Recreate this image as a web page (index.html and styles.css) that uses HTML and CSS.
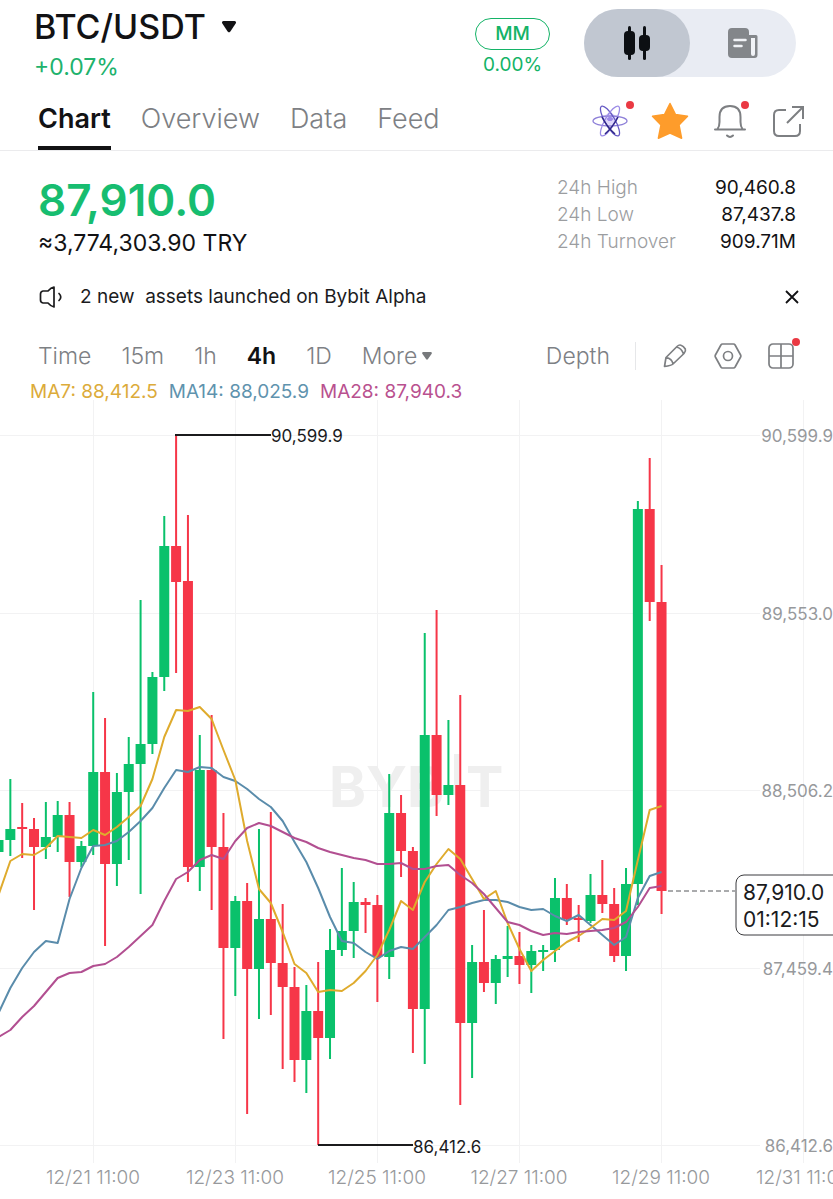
FILE: index.html
```html
<!DOCTYPE html>
<html lang="en">
    <head>
        <meta charset="utf-8">
        <title>BTC/USDT</title>
        <meta name="viewport" content="width=device-width, initial-scale=1.0">
        <link rel="stylesheet" href="styles.css">
    </head>
    <body>
    <header class="top-bar">
        <div class="pair">
            <h1>
                <button type="button" class="pair-button">BTC/USDT
                    <svg width="16" height="12" viewBox="0 0 16 13" aria-hidden="true"><path d="M2 0h12q2.500 .5 1.200 2.600L9.500 11.500q-1.500 1.800-3 0L.8 2.600Q-.5 .5 2 0z" fill="#121214"/></svg>
                </button>
            </h1>
            <p class="change">+0.07%</p>
        </div>
        <div class="margin-info">
            <span class="mm-badge">MM</span>
            <span class="mm-rate">0.00%</span>
        </div>
        <div class="view-switch">
            <button type="button" class="switch-item active" aria-label="Chart view">
                <svg width="28" height="36" viewBox="0 0 28 36" fill="#0c0f13"><rect x="1" y="6" width="11" height="24" rx="4"/><rect x="5" y="1" width="3" height="34" rx="1.500"/><rect x="16" y="10" width="11" height="16" rx="4"/><rect x="20" y="1" width="3" height="34" rx="1.500"/></svg>
            </button>
            <button type="button" class="switch-item" aria-label="Order view">
                <svg width="32" height="32" viewBox="0 0 32 32"><path d="M5 1h13q4 0 4 4v3h7q1.500 0 1.500 1.500V28q0 3-3 3H5q-4 0-4-4V5q0-4 4-4z" fill="#83868a"/><path d="M24 11h4v16q0 2-2 2t-2-2z" fill="#f1f3f7"/><path d="M7.500 13h11M7.500 19h7" stroke="#f1f3f7" stroke-width="2.500" stroke-linecap="round"/></svg>
            </button>
        </div>
    </header>

    <nav class="tabs">
        <a href="#chart" class="tab active">Chart</a>
        <a href="#overview" class="tab">Overview</a>
        <a href="#data" class="tab">Data</a>
        <a href="#feed" class="tab">Feed</a>
        <div class="tab-icons">
            <button type="button" class="icon-button dotted alpha" aria-label="Alpha">
                <svg width="36" height="36" viewBox="0 0 36 36" fill="none" stroke-width="1.300">
                    <circle cx="18" cy="16" r="6" fill="#ddd6fa"/>
                    <ellipse cx="18" cy="18" rx="17" ry="5" stroke="#8d7fd8"/>
                    <ellipse cx="18" cy="18" rx="17" ry="5" transform="rotate(60 18 18)" stroke="#6559c4"/>
                    <ellipse cx="18" cy="18" rx="17" ry="5" transform="rotate(120 18 18)" stroke="#9a8ae6"/>
                    <path d="M10 14q5 10 13 17M26 14q-5 10-13 17" stroke="#30288a" stroke-width="1.600"/>
                    <path d="M14.500 16l3.500-3 3.500 3-2 2h-3z" fill="#9c8be8"/>
                </svg>
            </button>
            <button type="button" class="icon-button" aria-label="Favourite">
                <svg width="38" height="38" viewBox="0 0 38 38"><path d="M19 1.500l5.500 11 12 1.700-8.500 8.700 2.600 13.300L19 31 7.400 36.200 10 22.900 1.500 14.200l12-1.700z" fill="#fe9c2b" stroke="#fe9c2b" stroke-width="1.500" stroke-linejoin="round"/></svg>
            </button>
            <button type="button" class="icon-button dotted" aria-label="Alerts">
                <svg width="36" height="36" viewBox="0 0 36 36" fill="none" stroke="#7d7f82" stroke-width="2" stroke-linecap="round" stroke-linejoin="round"><path d="M3 26.500h30M5.500 26q2-2.500 2-7v-5q0-11 10.500-11t10.500 11v5q0 4.500 2 7"/><path d="M15 32.500q3 3 6 0"/></svg>
            </button>
            <button type="button" class="icon-button" aria-label="Share">
                <svg width="36" height="36" viewBox="0 0 36 36" fill="none" stroke="#7d7f82" stroke-width="2"><path d="M15 7H8q-5 0-5 5v16q0 5 5 5h16q5 0 5-5v-7M16 20L32 4M21 4h11v12"/></svg>
            </button>
        </div>
    </nav>

    <section class="summary">
        <div>
            <p class="price">87,910.0</p>
            <p class="fiat">≈3,774,303.90 TRY</p>
        </div>
        <dl class="stats">
            <div class="stat"><dt>24h High</dt><dd>90,460.8</dd></div>
            <div class="stat"><dt>24h Low</dt><dd>87,437.8</dd></div>
            <div class="stat"><dt>24h Turnover</dt><dd>909.71M</dd></div>
        </dl>
    </section>

    <section class="notice">
        <svg width="26" height="24" viewBox="0 0 26 24" fill="none" stroke="#1b1b1d" stroke-width="1.700" stroke-linejoin="round" stroke-linecap="round"><path d="M16 2v20q-3-.5-6-4H5q-2.500-.5-2.500-3V9q0-2.500 2.500-3h5q3-3.500 6-4z"/><path d="M21 8.500q3.500 3.500 0 7"/></svg>
        <a href="#alpha" class="notice-text">2 new  assets launched on Bybit Alpha</a>
        <button type="button" class="close-button" aria-label="Close">
            <svg width="14" height="14" viewBox="0 0 14 14" stroke="#121214" stroke-width="1.800"><path d="M1 1l12 12M13 1L1 13"/></svg>
        </button>
    </section>

    <section class="toolbar">
        <button type="button" class="frame">Time</button>
        <button type="button" class="frame">15m</button>
        <button type="button" class="frame">1h</button>
        <button type="button" class="frame active">4h</button>
        <button type="button" class="frame">1D</button>
        <button type="button" class="frame">More<svg width="10" height="8" viewBox="0 0 10 8"><path d="M1 0h8q1.500 .5 .5 2L6 7Q5 8.500 4 7L.5 2Q-.5 .5 1 0z" fill="#77797c"/></svg></button>
        <div class="tools">
            <button type="button" class="frame">Depth</button>
            <span class="divider"></span>
            <button type="button" class="tool" aria-label="Draw">
                <svg width="28" height="28" viewBox="0 0 28 28" fill="none" stroke="#7d7f82" stroke-width="1.700" stroke-linejoin="round"><path d="M3.500 24.500l1.500-9L16 4.500q2-2 4-1.300 2.500 .8 4.300 3.800 .8 2-1.300 4.500L12 22q-1.500 1.500-8.500 2.500zM5 15.500q6 1 7 6.500M15.500 5q5 1 7 7"/></svg>
            </button>
            <button type="button" class="tool" aria-label="Settings">
                <svg width="28" height="28" viewBox="0 0 28 28" fill="none" stroke="#7d7f82" stroke-width="1.700" stroke-linejoin="round"><path d="M8.500 2h11q1 0 1.600 1l5.500 10q.5 1 0 2l-5.500 10q-.6 1-1.600 1h-11q-1 0-1.600-1L1.400 15q-.5-1 0-2L6.900 3q.6-1 1.600-1z"/><circle cx="14" cy="14" r="4.500"/></svg>
            </button>
            <button type="button" class="tool dotted" aria-label="Layout">
                <svg width="28" height="28" viewBox="0 0 28 28" fill="none" stroke="#7d7f82" stroke-width="1.700"><rect x="2" y="2" width="24" height="24" rx="4"/><path d="M14 2v24M2 14h24"/></svg>
            </button>
        </div>
    </section>

    <p class="averages">
        <span class="ma7">MA7: 88,412.5</span>
        <span class="ma14">MA14: 88,025.9</span>
        <span class="ma28">MA28: 87,940.3</span>
    </p>

    <svg class="chart" id="chart" viewBox="0 400 833 799" role="img" aria-label="BTC/USDT 4h candles">
        <g id="grid" class="grid"></g>
        <g class="watermark">
            <text x="329" y="807">BYB</text>
            <rect x="454" y="754" width="7" height="41"/>
            <text x="466" y="807">T</text>
        </g>
        <g id="candles"></g>
        <g id="averages"></g>
        <!-- highest and lowest price markers -->
        <path class="marker" d="M175 435H271M318 1145H413"/>
        <text class="marker-text" x="271" y="442">90,599.9</text>
        <text class="marker-text" x="413" y="1153">86,412.6</text>
        <g id="axis" class="axis"></g>
        <!-- last price -->
        <path class="last-line" d="M668 891H735"/>
        <rect class="last-box" x="736" y="875" width="120" height="60" rx="8"/>
        <text class="last-text" x="743" y="900">87,910.0</text>
        <text class="last-text" x="743" y="927">01:12:15</text>
    </svg>

    <script src="script.js"></script>
    </body>
</html>
```
FILE: styles.css
```css
*{
    box-sizing: border-box;
}

body{
    margin: 0;
    background-color: #fff;
    color: #121214;
    font-family: Inter, "Liberation Sans", sans-serif;
    overflow-x: hidden;
}

h1, p, dl, dd{
    margin: 0;
}

button{
    border: 0;
    padding: 0;
    background: none;
    font: inherit;
    color: inherit;
}

svg{
    display: block;
    flex: none;
}

a{
    text-decoration: none;
}

.top-bar{
    display: flex;
    align-items: flex-start;
    height: 88px;
    padding: 9px 37px 0 34px;
}

.pair{
    margin-right: auto;
}

h1{
    font-size: 34px;
    font-weight: 500;
    line-height: 36px;
}

.pair-button{
    display: flex;
    align-items: center;
    gap: 15px;
}

.change{
    margin-top: 8px;
    color: #20b26c;
    font-size: 23px;
    line-height: 28px;
}

.margin-info{
    display: flex;
    flex-direction: column;
    align-items: center;
    margin: 9px 34px 0 0;
    color: #14b367;
    font-size: 19px;
    font-weight: 500;
}

.mm-badge{
    width: 75px;
    border: 1px solid #14b367;
    border-radius: 16px;
    line-height: 30px;
    text-align: center;
}

.mm-rate{
    margin-top: 1px;
    font-weight: 400;
    line-height: 28px;
}

.view-switch{
    display: flex;
    border-radius: 34px;
    background-color: #e9ecf3;
}

.switch-item{
    display: flex;
    align-items: center;
    justify-content: center;
    width: 106px;
    height: 68px;
    border-radius: 34px;
}

.switch-item.active{
    background-color: #c1c7d1;
}

.tabs{
    display: flex;
    gap: 30px;
    height: 63px;
    padding: 0 26px 0 38px;
    border-bottom: 1px solid #ebebed;
}

.tab{
    height: 62px;
    color: #7d8084;
    font-size: 27px;
    font-weight: 300;
    line-height: 62px;
}

.tab.active{
    border-bottom: 4px solid #121214;
    color: #121214;
    font-weight: 600;
}

.tab-icons{
    display: flex;
    align-items: center;
    gap: 23px;
    margin-left: auto;
    padding-top: 3px;
}

.dotted{
    position: relative;
}

.dotted::after{
    content: "";
    position: absolute;
    top: -4px;
    right: -5px;
    width: 8px;
    height: 8px;
    border-radius: 50%;
    background-color: #ea3943;
}

.icon-button.dotted::after{
    top: -2px;
    right: -1px;
}

.icon-button.alpha::after{
    right: -6px;
}

.summary{
    display: flex;
    justify-content: space-between;
    padding: 23px 37px 0 38px;
}

.price{
    color: #17bd70;
    font-size: 44px;
    font-weight: 600;
    line-height: 52px;
}

.fiat{
    margin-top: 3px;
    font-size: 23px;
    line-height: 28px;
}

.stats{
    width: 239px;
    font-size: 19px;
}

.stat{
    display: flex;
    justify-content: space-between;
    line-height: 27px;
}

dt{
    color: #9b9da0;
    font-weight: 300;
}

.notice{
    display: flex;
    align-items: center;
    height: 79px;
    padding: 0 34px 0 38px;
    font-size: 19px;
}

.notice-text{
    margin: 0 auto 0 16px;
    color: #1b1b1d;
    white-space: pre;
}

.toolbar{
    display: flex;
    align-items: center;
    gap: 30px;
    height: 40px;
    padding: 0 38px;
    color: #7d8084;
    font-size: 23px;
    font-weight: 300;
}

.frame{
    display: flex;
    align-items: center;
    gap: 5px;
}

.frame.active{
    color: #121214;
    font-weight: 600;
}

.tools{
    display: flex;
    align-items: center;
    gap: 25px;
    margin-left: auto;
}

.divider{
    width: 1px;
    height: 28px;
    background-color: #e6e7e9;
}

.averages{
    display: flex;
    gap: 11px;
    padding-left: 30px;
    font-size: 19px;
    line-height: 32px;
}

.ma7{
    color: #dcab3a;
}

.ma14{
    color: #5f93ae;
}

.ma28{
    color: #b9518f;
}

/* chart */
.chart{
    width: 100%;
    height: auto;
    margin-top: -8px;
}

.grid{
    stroke: #f2f2f3;
    stroke-width: 1;
}

.watermark{
    fill: #efefef;
    font-size: 56px;
    font-weight: 700;
}

.up{
    fill: #0ac16b;
}

.down{
    fill: #f63648;
}

.average{
    fill: none;
    stroke-width: 2;
    stroke-linejoin: round;
}

.marker{
    stroke: #1b1b1d;
    stroke-width: 2;
}

.marker-text{
    fill: #1b1b1d;
    font-size: 17px;
}

.axis{
    fill: #97999c;
    font-size: 17px;
}

.axis .date{
    font-size: 19px;
    font-weight: 300;
    text-anchor: middle;
}

.axis .level{
    text-anchor: end;
}

.last-line{
    stroke: #55575a;
    stroke-dasharray: 5 3;
}

.last-box{
    fill: #fff;
    stroke: #3b3b3e;
}

.last-text{
    fill: #1b1b1d;
    font-size: 21px;
}
```
FILE: script.js
```js
const SVG = "http://www.w3.org/2000/svg";
const STEP = 11.84;

// direction, high, body top, body bottom, low
const candles = [
    ["up", 840, 840, 852, 852], ["up", 779, 829, 840, 856], ["down", 803, 827, 829, 858],
    ["down", 818, 829, 847, 910], ["up", 802, 837, 847, 859], ["up", 801, 815, 837, 852],
    ["down", 802, 815, 862, 897], ["up", 841, 846, 862, 867], ["up", 692, 772, 846, 855],
    ["down", 718, 772, 864, 946], ["up", 773, 792, 864, 886], ["up", 737, 764, 792, 860],
    ["up", 600, 744, 764, 894], ["up", 672, 677, 744, 754], ["up", 516, 546, 677, 691],
    ["down", 435, 546, 582, 673], ["down", 515, 581, 867, 882], ["up", 735, 770, 867, 891],
    ["down", 715, 770, 847, 910], ["down", 813, 847, 948, 1039], ["up", 896, 901, 948, 996],
    ["down", 883, 901, 969, 1114], ["up", 829, 919, 969, 1019], ["down", 812, 919, 963, 1015],
    ["down", 904, 963, 987, 1069], ["down", 967, 987, 1060, 1082], ["up", 985, 1011, 1060, 1093],
    ["down", 962, 1011, 1038, 1145], ["up", 929, 950, 1038, 1059], ["up", 868, 931, 950, 956],
    ["up", 882, 902, 931, 958], ["down", 898, 902, 905, 933], ["down", 895, 905, 957, 1002],
    ["up", 774, 813, 957, 979], ["down", 795, 813, 851, 877], ["down", 847, 851, 1009, 1053],
    ["up", 633, 735, 1009, 1064], ["down", 610, 735, 795, 816], ["up", 720, 785, 795, 805],
    ["down", 695, 785, 1023, 1105], ["up", 945, 962, 1023, 1078], ["down", 910, 962, 983, 992],
    ["up", 955, 959, 983, 1004], ["up", 926, 956, 959, 977], ["down", 932, 956, 965, 984],
    ["up", 945, 951, 965, 993], ["up", 945, 950, 952, 971], ["up", 878, 898, 950, 962],
    ["down", 884, 898, 919, 925], ["down", 905, 918, 920, 942], ["up", 874, 895, 921, 923],
    ["down", 860, 895, 904, 913], ["down", 888, 904, 956, 962], ["up", 868, 884, 956, 971],
    ["up", 501, 509, 884, 905], ["down", 458, 509, 602, 621], ["down", 565, 602, 891, 914]
];

const averages = {
    "#5a8cab": [1013, 988, 968, 952, 941, 943, 899, 868, 846, 845, 841, 832, 821, 808, 788, 770, 772, 767, 768, 777, 781, 789, 799, 807, 821, 842, 862, 888, 917, 941, 943, 952, 959, 951, 947, 949, 937, 925, 910, 907, 903, 900, 900, 902, 907, 910, 909, 916, 921, 915, 925, 935, 945, 937, 898, 876, 872],
    "#dfab2d": [895, 861, 854, 855, 848, 836, 837, 838, 830, 835, 827, 817, 806, 779, 737, 710, 711, 707, 719, 750, 780, 841, 889, 903, 932, 964, 973, 992, 990, 991, 983, 971, 955, 930, 901, 910, 882, 864, 849, 859, 879, 899, 891, 923, 949, 971, 960, 951, 942, 936, 928, 919, 920, 911, 860, 810, 806],
    "#b24f91": [1037, 1030, 1017, 1006, 992, 978, 973, 972, 966, 964, 957, 947, 936, 925, 901, 879, 872, 860, 855, 859, 841, 828, 823, 826, 832, 838, 842, 848, 852, 855, 858, 860, 864, 864, 863, 869, 869, 866, 865, 875, 883, 894, 908, 922, 925, 931, 935, 933, 934, 932, 931, 930, 928, 922, 907, 888, 886]
};

const levels = [["90,599.9", 435], ["89,553.0", 613], ["88,506.2", 790], ["87,459.4", 968], ["86,412.6", 1145]];
const dates = ["12/21 11:00", "12/23 11:00", "12/25 11:00", "12/27 11:00", "12/29 11:00", "12/31 11:00"];

function add(parent, tag, attrs, text) {
    const el = document.createElementNS(SVG, tag);
    for (const name in attrs) el.setAttribute(name, attrs[name]);
    if (text) el.textContent = text;
    document.getElementById(parent).appendChild(el);
}

function xAt(i) {
    return i * STEP - 1.5;
}

levels.forEach(function ([label, y]) {
    add("grid", "line", { x1: 0, y1: y + .5, x2: 760, y2: y + .5 });
    add("axis", "text", { x: 833, y: y + 7, class: "level" }, label);
});

dates.forEach(function (label, i) {
    const x = Math.floor(xAt(8 + i * 12));
    add("grid", "line", { x1: x + .5, y1: 400, x2: x + .5, y2: 1163 });
    add("axis", "text", { x: x, y: 1184, class: "date" }, label);
});

candles.forEach(function ([dir, high, top, bottom, low], i) {
    add("candles", "rect", { x: xAt(i) - 1, y: high, width: 2, height: low - high, class: dir });
    add("candles", "rect", { x: xAt(i) - 5, y: top, width: 10, height: bottom - top, class: dir });
});

for (const color in averages) {
    const points = averages[color].map((y, i) => xAt(i) + "," + y).join(" ");
    add("averages", "polyline", { points: points, stroke: color, class: "average" });
}
```
